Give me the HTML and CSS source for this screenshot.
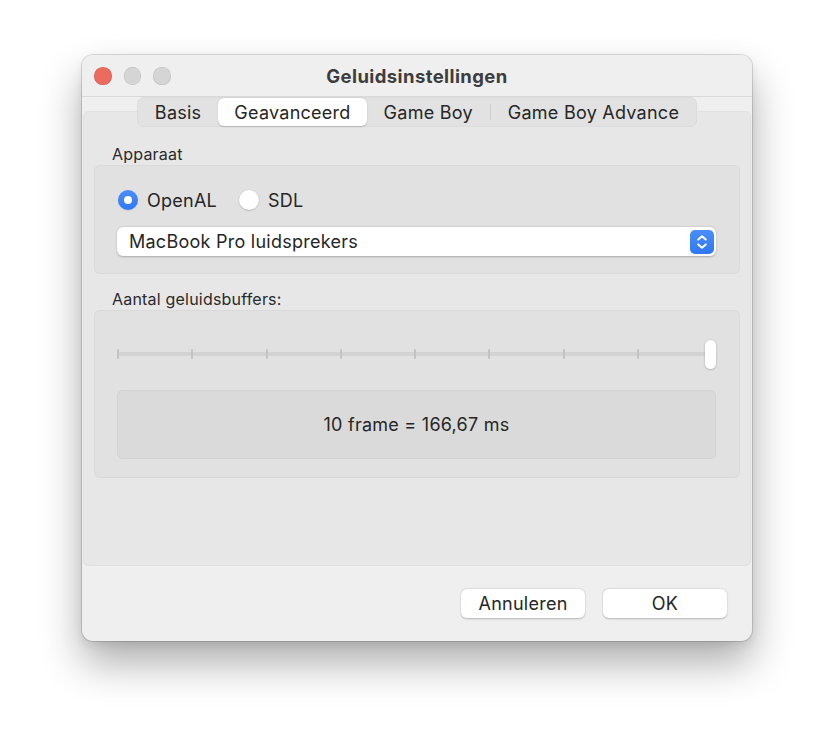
FILE: index.html
```html
<!DOCTYPE html>
<html lang="nl">
<head>
<meta charset="utf-8">
<title>Geluidsinstellingen</title>
<link rel="stylesheet" href="styles.css">
</head>
<body>
<div class="window">
  <div class="titlebar">
    <div class="lights">
      <span class="light red"></span>
      <span class="light grey"></span>
      <span class="light grey"></span>
    </div>
    <div class="title">Geluidsinstellingen</div>
    <div class="title-spacer"></div>
  </div>
  <div class="tabs">
    <div class="segmented">
      <span class="seg">Basis</span>
      <span class="seg selected">Geavanceerd</span>
      <span class="seg">Game Boy</span>
      <span class="seg-sep"></span>
      <span class="seg">Game Boy Advance</span>
    </div>
  </div>
  <div class="panel">
    <div class="group-label">Apparaat</div>
    <div class="group group-device">
      <div class="radios">
        <label class="radio-item"><span class="radio on"></span>OpenAL</label>
        <label class="radio-item"><span class="radio"></span>SDL</label>
      </div>
      <div class="popup">
        <span class="popup-text">MacBook Pro luidsprekers</span>
        <span class="stepper">
          <svg width="24" height="24" viewBox="0 0 24 24"><path d="M8.2 9.6 L12 6.2 L15.8 9.6 M8.2 14.4 L12 17.8 L15.8 14.4" fill="none" stroke="#fff" stroke-width="2" stroke-linecap="round" stroke-linejoin="round"/></svg>
        </span>
      </div>
    </div>
    <div class="group-label second">Aantal geluidsbuffers:</div>
    <div class="group group-buffers">
      <div class="slider">
        <div class="track"></div>
        <div class="ticks">
          <span class="tick"></span><span class="tick"></span><span class="tick"></span>
          <span class="tick"></span><span class="tick"></span><span class="tick"></span>
          <span class="tick"></span><span class="tick"></span><span class="tick"></span>
        </div>
        <div class="thumb"></div>
      </div>
      <div class="readout">10 frame = 166,67 ms</div>
    </div>
  </div>
  <div class="footer">
    <button class="btn">Annuleren</button>
    <button class="btn">OK</button>
  </div>
</div>
</body>
</html>
```

FILE: styles.css
```css
* { box-sizing: border-box; }
html, body { margin: 0; padding: 0; }
body {
  background: #ffffff;
  width: 834px;
  height: 750px;
  overflow: hidden;
  font-family: Inter, "Noto Sans", "Liberation Sans", sans-serif;
  color: #262626;
  font-size: 18px;
  letter-spacing: 0.25px;
}
.window {
  margin: 55px 0 0 82px;
  width: 670px;
  height: 586px;
  border-radius: 11px;
  background: #efefef;
  box-shadow: 0 0 0 1px rgba(0,0,0,0.13), 0 22px 42px rgba(0,0,0,0.32), 0 4px 10px rgba(0,0,0,0.08);
  display: flex;
  flex-direction: column;
  overflow: hidden;
}
.titlebar {
  height: 42px;
  flex: none;
  display: grid;
  grid-template-columns: 1fr auto 1fr;
  align-items: center;
  border-bottom: 1px solid #d9d9d9;
  background: #efefef;
  padding: 1px 12px 0 12px;
}
.lights { display: flex; gap: 12px; }
.light {
  width: 17.5px; height: 17.5px; border-radius: 50%;
  box-shadow: inset 0 0 0 0.5px rgba(0,0,0,0.12);
}
.light.red { background: #ed6a5e; }
.light.grey { background: #d5d5d5; }
.title {
  text-align: center;
  font-weight: 700;
  color: #3d3d3d;
  font-size: 18.5px;
  letter-spacing: 0.4px;
}
.tabs {
  flex: none;
  display: flex;
  justify-content: center;
  margin-bottom: -16px;
  position: relative;
  z-index: 1;
}
.segmented {
  height: 30px;
  display: flex;
  align-items: center;
  background: #e2e2e2;
  border-radius: 7px;
  padding: 0 1px;
  box-shadow: inset 0 0 0 0.5px rgba(0,0,0,0.05);
}
.seg {
  height: 28px;
  display: flex;
  align-items: center;
  padding: 0 17px;
  border-radius: 6px;
  color: #262626;
}
.seg.selected {
  background: #ffffff;
  box-shadow: 0 0.5px 1.5px rgba(0,0,0,0.2);
  padding: 0 16px;
}
.seg-sep {
  width: 1px; height: 16px; background: #cdcdcd;
}
.panel {
  flex: none;
  height: 455px;
  margin: 0 1px;
  background: #e7e7e7;
  border-radius: 6px;
  box-shadow: inset 0 0 0 1px #e1e1e1;
  padding: 33px 11px 0 11px;
}
.group-label {
  height: 21px;
  line-height: 20px;
  padding-left: 18px;
  font-size: 16px;
  letter-spacing: 0.2px;
  color: #2a2a2a;
}
.group-label.second { margin-top: 15px; }
.group {
  background: #e1e1e1;
  border-radius: 6px;
  box-shadow: inset 0 0 0 1px #dadada;
  padding: 0 24px 0 23px;
}
.group-device { height: 109px; padding-top: 23px; }
.radios { display: flex; align-items: center; height: 24px; gap: 22px; padding-left: 1px; }
.radio-item { display: flex; align-items: center; gap: 9px; }
.radio {
  width: 20px; height: 20px; border-radius: 50%;
  background: #ffffff;
  box-shadow: 0 0.5px 1.5px rgba(0,0,0,0.28);
  display: flex; align-items: center; justify-content: center;
}
.radio.on { background: linear-gradient(#4a8ef9, #2f78f5); box-shadow: 0 0.5px 1px rgba(0,0,0,0.2); }
.radio.on::after { content: ""; width: 8px; height: 8px; border-radius: 50%; background: #fff; }
.popup {
  margin-top: 15px;
  height: 29px;
  background: #ffffff;
  border-radius: 6px;
  box-shadow: 0 0.5px 2px rgba(0,0,0,0.25);
  display: flex;
  align-items: center;
  justify-content: space-between;
  padding: 0 2px 0 12px;
}
.stepper {
  width: 24px; height: 24px; border-radius: 5px;
  background: linear-gradient(#4a8ef9, #2f78f5);
  display: flex;
}
.group-buffers { height: 168px; padding-top: 30px; }
.slider { position: relative; height: 29px; }
.track {
  position: absolute; left: 0; right: 5px; top: 12px; height: 4px;
  border-radius: 2px; background: #d3d3d3;
}
.ticks {
  position: absolute; left: 0; width: 596px; top: 9px; height: 10px;
  display: flex; justify-content: space-between;
}
.tick { width: 2px; height: 10px; background: #c3c3c3; border-radius: 1px; }
.thumb {
  position: absolute; right: 0; top: 0; width: 11px; height: 29px;
  background: #ffffff; border-radius: 6px;
  box-shadow: 0 0.5px 2px rgba(0,0,0,0.3);
}
.readout {
  margin-top: 21px;
  height: 69px;
  background: #dadada;
  border-radius: 6px;
  box-shadow: inset 0 0 0 1px #d3d3d3;
  display: flex; align-items: center; justify-content: center;
}
.footer {
  flex: 1;
  display: flex;
  justify-content: flex-end;
  align-items: flex-start;
  gap: 18px;
  padding: 23px 25px 0 0;
}
.btn {
  font: inherit;
  letter-spacing: inherit;
  color: #262626;
  width: 124px;
  height: 29px;
  background: #ffffff;
  border: none;
  border-radius: 6px;
  box-shadow: 0 0.5px 2px rgba(0,0,0,0.25);
  padding: 0;
}
```
